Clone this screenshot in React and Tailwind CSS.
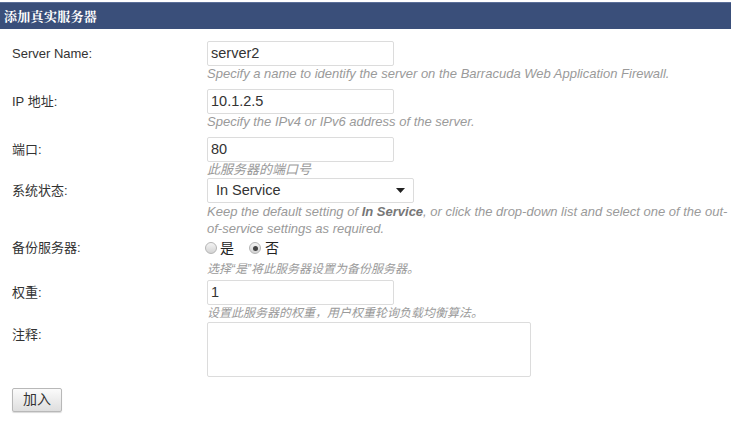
import React from "react";

const cn = "font-['Liberation_Sans','Noto_Sans_CJK_SC',sans-serif]";

function Label({ children, className = "" }) {
  return (
    <div className={`w-[207px] shrink-0 pl-3 text-[13px] text-[#333] ${className}`}>
      {children}
    </div>
  );
}

function Help({ children, size = "text-[13px]" }) {
  return <div className={`${size} leading-[16px] italic text-[#9a9a9a]`}>{children}</div>;
}

function TextInput({ value, w = "w-[187px]" }) {
  return (
    <div className={`${w} h-[25px] border border-[#dcdcdc] rounded-[2px] bg-white px-[3px] flex items-center text-[14.5px] text-[#333]`}>
      {value}
    </div>
  );
}

function Radio({ checked }) {
  return (
    <span className="w-[12px] h-[12px] rounded-full border border-[#b5b5b5] bg-gradient-to-b from-[#f4f4f4] to-[#d3d3d3] flex items-center justify-center">
      {checked && <span className="w-[5px] h-[5px] rounded-full bg-[#444]" />}
    </span>
  );
}

export default function App() {
  return (
    <div className={`w-[731px] h-[422px] bg-white overflow-hidden ${cn}`}>
      {/* Header */}
      <div className="mt-[2px] h-[27px] bg-[#3a4f7a] border-t border-[#5b6f99] flex items-center pl-1">
        <span className="text-white font-bold text-[13px] tracking-[0.3px] font-['Noto_Serif_CJK_SC','Noto_Sans_CJK_SC',serif]">
          添加真实服务器
        </span>
      </div>

      <div className="pt-[12px]">
        {/* Server Name */}
        <div className="flex mb-[7px]">
          <Label className="h-[25px] flex items-center">Server Name:</Label>
          <div>
            <TextInput value="server2" />
            <Help>Specify a name to identify the server on the Barracuda Web Application Firewall.</Help>
          </div>
        </div>

        {/* IP */}
        <div className="flex mb-[7px]">
          <Label className="h-[25px] flex items-center">IP 地址:</Label>
          <div>
            <TextInput value="10.1.2.5" />
            <Help>Specify the IPv4 or IPv6 address of the server.</Help>
          </div>
        </div>

        {/* Port */}
        <div className="flex">
          <Label className="h-[25px] flex items-center">端口:</Label>
          <div>
            <TextInput value="80" />
            <Help>此服务器的端口号</Help>
          </div>
        </div>

        {/* Status */}
        <div className="flex">
          <Label className="h-[25px] flex items-center">系统状态:</Label>
          <div className="w-[524px]">
            <div className="w-[207px] h-[25px] border border-[#dcdcdc] rounded-[2px] bg-white pl-[8px] pr-[8px] flex items-center justify-between text-[14.5px] text-[#333]">
              <span>In Service</span>
              <svg width="9" height="5" viewBox="0 0 9 5">
                <path d="M0 0h9L4.5 5z" fill="#222" />
              </svg>
            </div>
            <div className="text-[13px] leading-[17px] italic text-[#9a9a9a]">
              Keep the default setting of <b className="text-[#777]">In Service</b>, or click the drop-down list and select one of the out-of-service settings as required.
            </div>
          </div>
        </div>

        {/* Backup */}
        <div className="flex mt-[2px] mb-[3px]">
          <Label className="h-[18px] flex items-center">备份服务器:</Label>
          <div>
            <div className="h-[18px] flex items-center text-[14px] text-[#222]">
              <span className="-ml-[2px]"><Radio /></span>
              <span className="ml-[3px]">是</span>
              <span className="ml-[15px]"><Radio checked /></span>
              <span className="ml-[4px]">否</span>
            </div>
            <div className="mt-[4px]"><Help size="text-[12px]">选择“是”将此服务器设置为备份服务器。</Help></div>
          </div>
        </div>

        {/* Weight */}
        <div className="flex mb-[1px]">
          <Label className="h-[25px] flex items-center">权重:</Label>
          <div>
            <TextInput value="1" />
            <Help size="text-[12px]">设置此服务器的权重，用户权重轮询负载均衡算法。</Help>
          </div>
        </div>

        {/* Comment */}
        <div className="flex">
          <Label className="pt-[3px]">注释:</Label>
          <div className="w-[324px] h-[55px] border border-[#dcdcdc] rounded-[2px] bg-white" />
        </div>

        <div className="pl-3 mt-[10px]">
          <button className="w-[50px] h-[24px] border border-[#b8b8b8] rounded-[2px] bg-gradient-to-b from-[#fbfbfb] to-[#dedede] shadow-[0_1px_1px_rgba(0,0,0,0.15)] text-[14px] text-[#333]">
            加入
          </button>
        </div>
      </div>
    </div>
  );
}
